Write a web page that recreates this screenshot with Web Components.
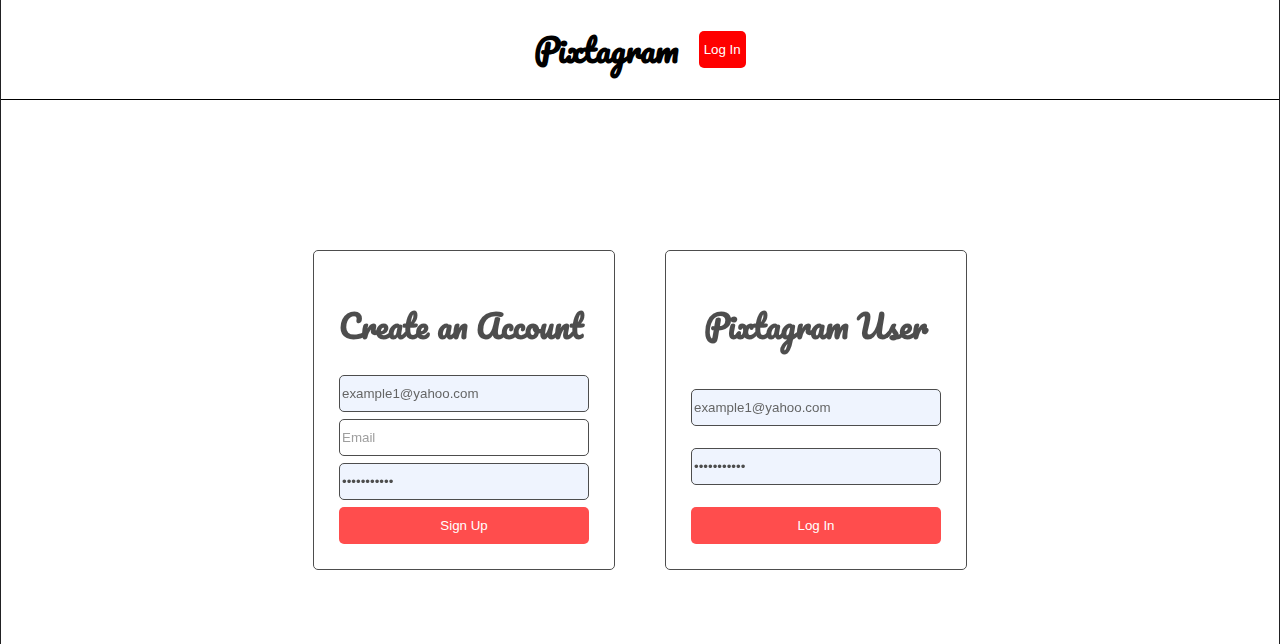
<!DOCTYPE html>
<html lang="en">
<head>
<meta charset="utf-8">
<meta name="viewport" content="width=device-width, initial-scale=1">
<title>Pixtagram</title>
<style>
  html, body { margin: 0; background: #fff; }
  body {
    font-family: "Liberation Sans", Arial, sans-serif;
    --script: Pacifico, cursive;
  }
</style>
</head>
<body>
<pix-app>
  <pix-header slot="header">
    <span>Pixtagram</span>
    <pix-button slot="action">Log In</pix-button>
  </pix-header>
  <auth-card>
    <span slot="title">Create an Account</span>
    <pix-field label="Username" type="text" value="example1@yahoo.com"></pix-field>
    <pix-field label="Email" type="email"></pix-field>
    <pix-field label="Password" type="password" value="password123"></pix-field>
    <pix-button>Sign Up</pix-button>
  </auth-card>
  <auth-card roomy>
    <span slot="title">Pixtagram User</span>
    <pix-field label="Email" type="email" value="example1@yahoo.com"></pix-field>
    <pix-field label="Password" type="password" value="password123"></pix-field>
    <pix-button>Log In</pix-button>
  </auth-card>
</pix-app>

<template id="app">
  <style>
    :host {
      display: flex; flex-direction: column; box-sizing: border-box;
      min-height: 100vh; border: solid #212123; border-width: 0 1px;
    }
    main {
      display: flex; flex-wrap: wrap; justify-content: center;
      gap: 50px; padding: 150px 24px 48px;
    }
  </style>
  <slot name="header"></slot>
  <main><slot></slot></main>
</template>

<template id="header">
  <style>
    :host { display: block; }
    header {
      display: flex; align-items: center; justify-content: center; gap: 20px;
      box-sizing: border-box; min-height: 100px; border-bottom: 1px solid #000;
    }
    h1 {
      margin: 0; padding-bottom: 2px; font: bold 32px/48px var(--script);
      color: #000; white-space: nowrap;
    }
  </style>
  <header><h1><slot></slot></h1><slot name="action"></slot></header>
</template>

<template id="card">
  <style>
    :host { display: flex; opacity: 0.7; --gap: 7px; --title-align: start; }
    :host([roomy]) { --gap: 22px; --title-align: center; }
    form {
      display: flex; flex-direction: column; gap: var(--gap);
      box-sizing: border-box; width: 302px; min-height: 320px; padding: 25px;
      border: 1px solid #000; border-radius: 5px;
    }
    h2 {
      flex: 1; margin: 0; padding-top: 25px; text-align: var(--title-align); white-space: nowrap;
      font: bold 32px/48px var(--script); color: #000;
    }
  </style>
  <form>
    <h2><slot name="title"></slot></h2>
    <slot></slot>
  </form>
</template>

<template id="field">
  <style>
    :host { display: block; }
    input {
      display: block; box-sizing: border-box; width: 100%; height: 37px;
      padding: 0 2px; border: 1px solid #000; border-radius: 5px; outline: 0;
      background: #fff; color: #222; font-family: inherit;
    }
    input.filled { background: #e8f0fe; }
    input[type="password"] { color: #000; }
    input::placeholder { color: #757575; }
  </style>
  <input>
</template>

<template id="button">
  <style>
    :host { display: block; }
    button {
      display: block; width: 100%; height: 37px; padding: 0 5px;
      border: 0; border-radius: 5px; background: #f00; color: #fff;
      font-family: inherit; cursor: pointer;
    }
  </style>
  <button type="button"><slot></slot></button>
</template>

<script>
  class TemplateElement extends HTMLElement {
    constructor() {
      super();
      const template = document.getElementById(this.constructor.template);
      this.attachShadow({ mode: "open" }).append(template.content.cloneNode(true));
    }
  }
  class PixApp extends TemplateElement { static template = "app"; }
  class PixHeader extends TemplateElement { static template = "header"; }
  class AuthCard extends TemplateElement { static template = "card"; }
  class PixButton extends TemplateElement { static template = "button"; }
  class PixField extends TemplateElement {
    static template = "field";
    connectedCallback() {
      const input = this.shadowRoot.querySelector("input");
      const label = this.getAttribute("label");
      const value = this.getAttribute("value") || "";
      input.type = this.getAttribute("type") || "text";
      input.placeholder = label;
      input.setAttribute("aria-label", label);
      input.value = value;
      input.classList.toggle("filled", value !== "");
    }
  }
  customElements.define("pix-app", PixApp);
  customElements.define("pix-header", PixHeader);
  customElements.define("auth-card", AuthCard);
  customElements.define("pix-button", PixButton);
  customElements.define("pix-field", PixField);
</script>
</body>
</html>
